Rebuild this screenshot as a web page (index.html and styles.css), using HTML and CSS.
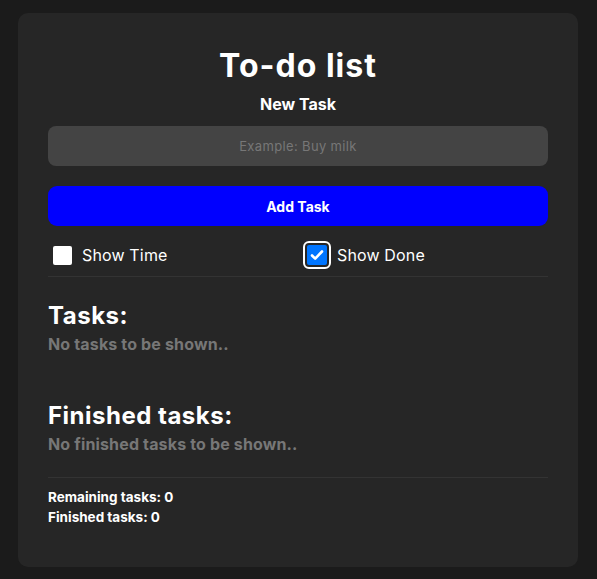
FILE: index.html
```html
<!DOCTYPE html>
<html lang="en">
<head>
<meta charset="utf-8">
<title>To-do list</title>
<link rel="stylesheet" href="styles.css">
</head>
<body>
<main class="card">
  <h1 class="title">To-do list</h1>
  <label class="new-label" for="task">New Task</label>
  <input class="task-input" id="task" type="text" placeholder="Example: Buy milk">
  <button class="add-btn" type="button">Add Task</button>
  <div class="options">
    <div class="option">
      <span class="box"></span>
      <span class="option-text">Show Time</span>
    </div>
    <div class="option option-right">
      <span class="box box-checked">
        <svg viewBox="0 0 20 20" width="20" height="20"><path d="M5 10.5l3.2 3.2L15 6.5" fill="none" stroke="#fff" stroke-width="2.6" stroke-linecap="round" stroke-linejoin="round"/></svg>
      </span>
      <span class="option-text">Show Done</span>
    </div>
  </div>
  <section class="group">
    <h2 class="group-title">Tasks:</h2>
    <p class="empty">No tasks to be shown..</p>
  </section>
  <section class="group group-finished">
    <h2 class="group-title">Finished tasks:</h2>
    <p class="empty">No finished tasks to be shown..</p>
  </section>
  <footer class="stats">
    <p class="stat">Remaining tasks: 0</p>
    <p class="stat">Finished tasks: 0</p>
  </footer>
</main>
</body>
</html>
```
FILE: styles.css
```css
* { box-sizing: border-box; }
html, body { margin: 0; padding: 0; }
body {
  background: #1b1b1b;
  font-family: "Inter", "DejaVu Sans", sans-serif;
  color: #fff;
  padding: 13px 0 0 18px;
}
.card {
  width: 560px;
  background: #262626;
  border-radius: 10px;
  padding: 25px 30px 40px;
  display: flex;
  flex-direction: column;
}
.title {
  margin: 0;
  text-align: center;
  font-size: 32px;
  line-height: 56px;
  font-weight: 700;
  letter-spacing: 1px;
}
.new-label {
  text-align: center;
  font-size: 16px;
  line-height: 20px;
  font-weight: 700;
}
.task-input {
  margin-top: 12px;
  height: 40px;
  border: none;
  border-radius: 8px;
  background: #444;
  color: #fff;
  font-family: inherit;
  font-size: 13px;
  letter-spacing: 0.35px;
  text-align: center;
  outline: none;
}
.task-input::placeholder { color: #777; }
.add-btn {
  margin-top: 20px;
  height: 40px;
  border: none;
  border-radius: 9px;
  background: #0000ff;
  color: #fff;
  font-family: inherit;
  font-size: 14px;
  font-weight: 700;
}
.options {
  display: grid;
  grid-template-columns: 1fr 1fr;
  height: 51px;
  padding-top: 8px;
  border-bottom: 1px solid #333;
}
.option {
  display: flex;
  align-items: center;
  gap: 10px;
  padding-left: 5px;
  font-size: 16px;
  letter-spacing: 0.15px;
}
.option-right { padding-left: 9px; gap: 10px; }
.box {
  width: 19px;
  height: 19px;
  border-radius: 2px;
  background: #fff;
  display: flex;
}
.box-checked {
  width: 20px;
  height: 20px;
  background: #0075ff;
  outline: 2px solid #fff;
  outline-offset: 2px;
  border-radius: 2px;
}
.group { padding-top: 24px; }
.group-finished { padding-top: 44px; }
.group-title {
  margin: 0;
  font-size: 24px;
  line-height: 30px;
  font-weight: 700;
  letter-spacing: 0.5px;
}
.empty {
  margin: 0;
  font-size: 16px;
  line-height: 26px;
  font-weight: 700;
  color: #777;
  letter-spacing: 0.15px;
}
.stats {
  margin-top: 20px;
  border-top: 1px solid #333;
  padding-top: 9px;
}
.stat {
  margin: 0;
  font-size: 13.5px;
  line-height: 20px;
  font-weight: 700;
}
```
